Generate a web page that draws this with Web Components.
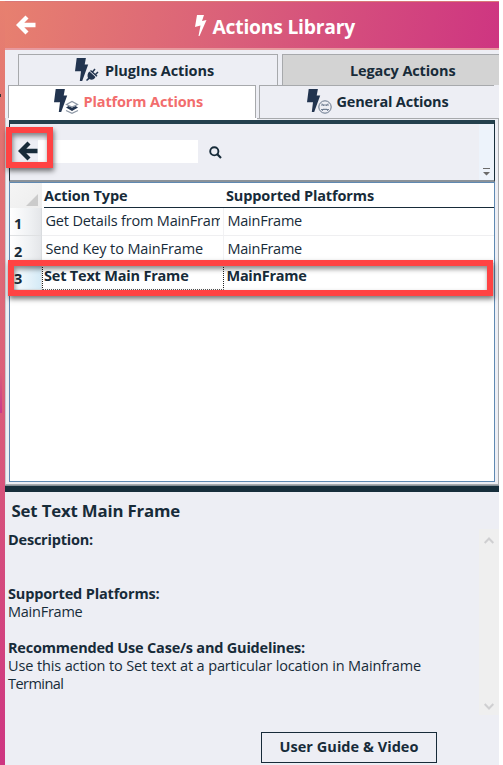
<!DOCTYPE html>
<html lang="en"><head><meta charset="utf-8"><title>Actions Library</title>
<style>
body{margin:0;width:503px;height:765px;overflow:hidden;background:#fff;font:14.5px "Open Sans","Noto Sans",sans-serif;color:#172b39}
</style></head><body><actions-app></actions-app>
<script>
const define=(name,html,after)=>customElements.define(name,class extends HTMLElement{
  connectedCallback(){
    if(!this.shadowRoot){const r=this.attachShadow({mode:'open'});r.innerHTML=html;}
    if(after)after(this,this.shadowRoot);
  }
});

// A single line of text, tracked so that it fills the width given in "w".
define('fit-text',`<style>:host{display:block;white-space:nowrap;flex:none}:host([b]){font-weight:700}span{display:inline-block}</style><span><slot></slot></span>`,(el,r)=>{
  const w=+el.getAttribute('w'),s=r.querySelector('span');
  if(w){const n=el.textContent.length;s.style.letterSpacing=((w-s.getBoundingClientRect().width)/n)+'px';}
});

const bolt='<path d="M1.700 0H10.900L9.700 6.500H13.200L7.200 23H4.800L6 13.300H0Z" fill="#22344f"/>';
const icons={
  plug:`<svg width="24" height="24" viewBox="0 0 24 24">${bolt}<g fill="#22344f"><path d="M14.500 13.500L20.500 19L19 21C17 22 15.500 21.800 14.500 21L12 23L11 22L13 20C12 18 12.500 15 14.500 13.500Z"/><path d="M15.500 12.500L22 18.300M17.500 14L20 11M20.500 16.500L23 14" stroke="#22344f" stroke-width="1.500"/></g></svg>`,
  layers:`<svg width="25" height="25" viewBox="0 0 25 25">${bolt}<path d="M12 18.500L14.500 17L18 18.500L21.500 17L24 18.500L18 22Z" fill="#22344f"/><path d="M12.500 15.500L18 12.500L23.500 15.500L18 18ZM12 21.500L18 24.300L24 21.500" fill="none" stroke="#8d97a5" stroke-width="1.200"/></svg>`,
  general:`<svg width="25" height="25" viewBox="0 0 25 25">${bolt}<circle cx="18" cy="18" r="6.200" fill="#edeef4" stroke="#66758a"/><path d="M14 16H22M14 20.500H22M15 14.500L17 17M21 14.500L19 17M15 22L17 19.500M21 22L19 19.500" stroke="#66758a" stroke-width=".9"/></svg>`,
  arrow:`<svg width="20" height="20" viewBox="0 0 20 20"><path d="M11 2L3 10L11 18M3 10H19.500" fill="none" stroke="currentColor" stroke-width="4.300"/></svg>`,
  up:`<svg width="10" height="7" viewBox="0 0 10 7"><path d="M.7 6L5 1.500L9.300 6" fill="none" stroke="#cfcfd1" stroke-width="2"/></svg>`,
  down:`<svg width="10" height="7" viewBox="0 0 10 7"><path d="M.7 1L5 5.500L9.300 1" fill="none" stroke="#cfcfd1" stroke-width="2"/></svg>`
};
define('ui-icon','<style>:host{display:block;flex:none}svg{display:block}</style><div></div>',(el,r)=>{r.querySelector('div').innerHTML=icons[el.getAttribute('name')]});

define('app-header',`<style>
:host{display:flex;height:49px;box-sizing:border-box;border-top:1px solid #d97878;border-bottom:2px solid #e79a9f;background:linear-gradient(100deg,#e7806f 0,#d95e7a 48%,#ce3581 100%);color:#fff;align-items:center;padding:0 0 0 11px}
fit-text{font-size:19.300px;line-height:30px;margin:3px 0 0 6px}
.b{margin-left:158.500px;flex:none}
</style><ui-icon name="arrow"></ui-icon><svg class="b" width="12" height="21" viewBox="0 0 12 21"><path d="M2 0H9L7 6L11.500 5L4.500 21H3.500L5.500 10.500L0 12Z" fill="#fff"/></svg><fit-text b w="142.500">Actions Library</fit-text>`);

define('action-tab',`<style>
:host{display:flex;box-sizing:border-box;border:1px solid #a7a9ac;border-bottom:0;background:#edeef4;flex:none;height:100%;width:var(--w);padding-left:var(--p);gap:var(--g,6px)}
:host([selected]){background:#fff;color:#f26d6d}:host([legacy]){background:#d3d3d3}:host([cut]){border-right:0}
fit-text{line-height:32px}
</style><slot name="icon"></slot><fit-text b><slot></slot></fit-text>`,(el,r)=>{
  const t=r.querySelector('fit-text'),s=t.shadowRoot.querySelector('span');
  s.style.letterSpacing=((+el.getAttribute('tw')-s.getBoundingClientRect().width)/el.textContent.trim().length)+'px';
});

define('action-tabs',`<style>
:host{display:block;background:#edeef4;padding-top:4px}
.r{display:flex}.one{height:31px;padding-left:13px;gap:4px}.two{height:33px;padding-left:3px;gap:3px;box-sizing:border-box}
ui-icon{margin-top:3px}
</style><div class="r one"><action-tab tw="109" style="--w:260px;--p:56px"><ui-icon slot="icon" name="plug"></ui-icon>PlugIns Actions</action-tab><action-tab tw="105.500" legacy cut style="--w:217px;--p:67px">Legacy Actions</action-tab></div>
<div class="r two"><action-tab selected tw="119.500" style="--w:248px;--p:45px;--g:4.500px"><ui-icon slot="icon" name="layers"></ui-icon>Platform Actions</action-tab><action-tab tw="112" cut style="--w:235px;--p:47px;--g:4.500px"><ui-icon slot="icon" name="general"></ui-icon>General Actions</action-tab></div>`);

define('search-bar',`<style>
:host{display:flex;box-sizing:border-box;height:62px;border:1px solid #172e3b;border-top:4px solid #24404d;border-bottom:2px solid #8b9299;background:#edeef4;padding-left:8px;align-items:flex-start}
ui-icon{margin-top:17px;color:#172b39}.in{width:160px;height:23px;background:#fff;margin:16px 0 0}
.s{margin:22px 0 0 11px}.e{margin-left:auto;width:15px;height:56px;background:#edf3fb;display:flex;align-items:flex-end;justify-content:center}
.e svg{margin-bottom:4px}
</style><ui-icon name="arrow"></ui-icon><div class="in"></div><svg class="s" width="13" height="13" viewBox="0 0 13 13"><circle cx="5.300" cy="5.300" r="4.100" fill="none" stroke="#172b39" stroke-width="1.900"/><path d="M8.300 8.300L12 12" stroke="#172b39" stroke-width="2.200"/></svg><div class="e"><svg width="7" height="8"><path d="M0 0H7V1H0ZM0 4H7L3.500 7.500Z" fill="#6b6b6b"/></svg></div>`);

define('grid-row',`<style>
:host{display:flex;height:var(--h);box-sizing:border-box}
.n{width:31.500px;background:linear-gradient(90deg,#fff 0,#f0f2f4 60%,#e4e6e9);border-right:1px solid #d9dcdf;border-bottom:1px solid #dfe1e3;box-sizing:border-box;padding-left:4px;font-weight:700;line-height:31px;flex:none}
.c{box-sizing:border-box;border-bottom:1px solid #efeff1;line-height:25px;overflow:hidden;padding-left:4px}
.c1{width:182px;flex:none;border-right:1px solid #f2f2f4}.c2{flex:1;padding-left:4px}
:host([selected]) .n{background:linear-gradient(90deg,#fff,#d4eaf6);line-height:29px}
:host([selected]) .c{line-height:23px;border-bottom:1px dotted #555}
:host([selected]) .c1{border-left:1px dotted #222;border-right:1px dotted #222;padding-left:1.500px}:host([selected]) .c2{padding-left:3px;border-bottom:0}
</style><div class="n"><slot name="n"></slot></div><div class="c c1"><slot name="a"></slot></div><div class="c c2"><slot name="p"></slot></div>`);

define('action-grid',`<style>
:host{display:block;box-sizing:border-box;height:300px;border:1px solid #5f89b2;background:#fff}
.h{display:flex;height:25px;line-height:26px}.k{width:32px;background:linear-gradient(135deg,#f5f5f5,#ededed);flex:none;display:flex;align-items:flex-end;justify-content:flex-end}
.k i{width:0;height:0;border:6px solid transparent;border-right-color:#cbcbcb;border-bottom-color:#cbcbcb;margin:0 4px 2px 0}
.t{flex:1;margin-left:2px;border-bottom:1px solid #172b39;display:flex}.t fit-text:first-child{width:182px}
.clip{width:174.500px;overflow:hidden}
</style><div class="h"><div class="k"><i></i></div><div class="t"><fit-text b w="83.500">Action Type</fit-text><fit-text b w="148">Supported Platforms</fit-text></div></div>
<grid-row style="--h:28px"><span slot="n">1</span><div class="clip" slot="a"><fit-text w="186.500">Get Details from MainFrame</fit-text></div><fit-text slot="p" w="74.500">MainFrame</fit-text></grid-row>
<grid-row style="--h:28px"><span slot="n">2</span><fit-text slot="a" w="157.500">Send Key to MainFrame</fit-text><fit-text slot="p" w="74.500">MainFrame</fit-text></grid-row>
<grid-row selected style="--h:26px"><span slot="n">3</span><fit-text b slot="a" w="144.500">Set Text Main Frame</fit-text><fit-text b slot="p" w="80">MainFrame</fit-text></grid-row>`);

define('action-details',`<style>
:host{display:block;background:#edeef4;flex:1}
.m{display:flex;height:223px}.x{flex:1;line-height:18px;padding:3px 0 0 3px}
.x fit-text{height:18px}.x .t{font-size:16.800px;line-height:27px;height:34px;margin:2px 0 0 3.500px}
.g{height:36px}.g1{height:18px}
.s{width:20px;height:186px;margin-top:37px;background:#efefef;display:flex;flex-direction:column;align-items:center;justify-content:space-between;box-sizing:border-box;padding:8px 0 5px}
.btn{margin:17px 0 0 256px;width:176px;height:31px;box-sizing:border-box;border:1px solid #172b39;line-height:28px;padding-left:17.500px}
</style><div class="m"><div class="x"><fit-text class="t" b w="168.500">Set Text Main Frame</fit-text><fit-text b w="85">Description:</fit-text><div class="g"></div><fit-text b w="151.500">Supported Platforms:</fit-text><fit-text w="74.500">MainFrame</fit-text><div class="g1"></div><fit-text b w="297">Recommended Use Case/s and Guidelines:</fit-text><fit-text w="413">Use this action to Set text at a particular location in Mainframe</fit-text><fit-text w="55.500">Terminal</fit-text></div><div class="s"><ui-icon name="up"></ui-icon><ui-icon name="down"></ui-icon></div></div><div class="btn"><fit-text b w="139">User Guide &amp; Video</fit-text></div>`);

define('red-box',`<style>:host{position:absolute;box-sizing:border-box;border:6px solid #ff4343;box-shadow:1px 3px 5px #0008,inset 1px 3px 5px #0007}</style>`);

define('actions-app',`<style>
:host{display:flex;position:relative;width:499px;height:765px;box-sizing:border-box;padding-top:1px}
.l{width:5px;background:linear-gradient(#e7806f,#dd6878 38%,#ce3581);display:flex;flex-direction:column}
.l .d{width:1px;height:3px;background:#333;margin-top:93px}.l .p{width:2px;height:40px;margin-top:276px;background:linear-gradient(#d95e7a,#c93a8c)}
.p0{flex:1;display:flex;flex-direction:column;min-width:0}
.w{background:#edeef4;border:1px solid #a9abae;border-top:0;padding:0 3px 3px;box-sizing:border-box;height:367px;border-left-color:#c9cacd}
.r{height:2px;display:flex;margin:0 -4px}.r i{background:#fff;width:248px;margin-left:4px}.r b{flex:1;border-top:1px solid #a7a9ac;box-sizing:border-box}
.sp{height:7px;background:#172e3b;border-top:1px solid #87929a;box-sizing:border-box}
</style><div class="l"><div class="d"></div><div class="p"></div></div><div class="p0"><app-header></app-header><action-tabs></action-tabs><div class="w"><div class="r"><i></i><b></b></div><search-bar></search-bar><action-grid></action-grid></div><div class="sp"></div><action-details></action-details></div>
<red-box style="left:6px;top:127px;width:47px;height:41px"></red-box><red-box style="left:8px;top:260px;width:485px;height:36px"></red-box>`);
</script></body></html>
